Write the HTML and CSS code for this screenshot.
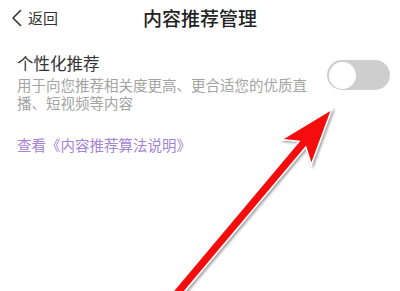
FILE: index.html
```html
<!DOCTYPE html>
<html lang="zh-CN">
<head>
    <meta charset="UTF-8">
    <meta name="viewport" content="width=device-width, initial-scale=1.0">
    <title>内容推荐管理</title>
    <link rel="stylesheet" href="styles.css">
</head>
<body>
    <!-- 顶部导航 -->
    <header class="topbar">
        <a class="back" href="#">
            <svg class="back-icon" width="12" height="18" viewBox="0 0 12 18">
                <path d="M9.5 1.5 L2 9 L9.5 16.5" fill="none" stroke="#333" stroke-width="1.6" stroke-linecap="round" stroke-linejoin="round"/>
            </svg>
            <span>返回</span>
        </a>
        <h1 class="title">内容推荐管理</h1>
    </header>

    <main class="content">
        <section class="setting">
            <div class="setting-text">
                <h2 class="setting-name">个性化推荐</h2>
                <p class="setting-desc">用于向您推荐相关度更高、更合适您的优质直播、短视频等内容</p>
            </div>
            <div class="toggle"><span class="knob"></span></div>
        </section>
        <a class="link" href="#">查看《内容推荐算法说明》</a>
    </main>

    <!-- 标注箭头 -->
    <svg class="arrow" width="400" height="291" viewBox="0 0 400 291">
        <defs>
            <filter id="shadow" x="-20%" y="-20%" width="140%" height="140%">
                <feDropShadow dx="1.5" dy="1.5" stdDeviation="1" flood-color="#777" flood-opacity="0.7"/>
            </filter>
        </defs>
        <polygon points="332,109 311.3,164.7 305.8,147.1 168.2,310.8 161.4,305 299,141.3 281.5,139.6"
                 fill="#f50a0a" stroke="#fff" stroke-width="1.6" stroke-linejoin="miter" filter="url(#shadow)"/>
    </svg>
</body>
</html>
```

FILE: styles.css
```css
/* pamata iestatījumi */
body {
    margin: 0;
    padding: 0;
    background: #fff;
    font-family: "Noto Sans CJK SC", "Noto Sans", sans-serif;
    color: #333;
    overflow: hidden;
}
.topbar {
    position: relative;
    height: 37px;
    display: flex;
    align-items: center;
    justify-content: center;
}
.back {
    position: absolute;
    left: 11px;
    top: 9px;
    display: flex;
    align-items: center;
    gap: 5px;
    color: #333;
    text-decoration: none;
    font-size: 15px;
    line-height: 18px;
}
.title {
    margin: 0;
    font-size: 19px;
    font-weight: 500;
    color: #222;
    line-height: 24px;
    margin-top: -1px;
}
.content {
    padding: 15px 10px 0 17px;
}
.setting {
    display: flex;
    align-items: flex-start;
    justify-content: space-between;
}
.setting-text {
    width: 300px;
}
.setting-name {
    margin: 0;
    font-size: 16.5px;
    font-weight: 400;
    line-height: 22px;
    color: #333;
}
.setting-desc {
    margin: 2px 0 0;
    font-size: 14.5px;
    line-height: 17.5px;
    color: #a3a3a3;
}
.toggle {
    width: 63px;
    height: 30px;
    margin-top: 8px;
    border-radius: 15px;
    background: #cecece;
    display: flex;
    align-items: center;
    padding-left: 1.5px;
    box-sizing: border-box;
}
.knob {
    width: 27px;
    height: 27px;
    border-radius: 50%;
    background: #fff;
}
.link {
    display: block;
    margin-top: 24px;
    font-size: 14.5px;
    line-height: 20px;
    color: #a583d6;
    text-decoration: none;
}
.arrow {
    position: absolute;
    left: 0;
    top: 0;
    pointer-events: none;
}
```
